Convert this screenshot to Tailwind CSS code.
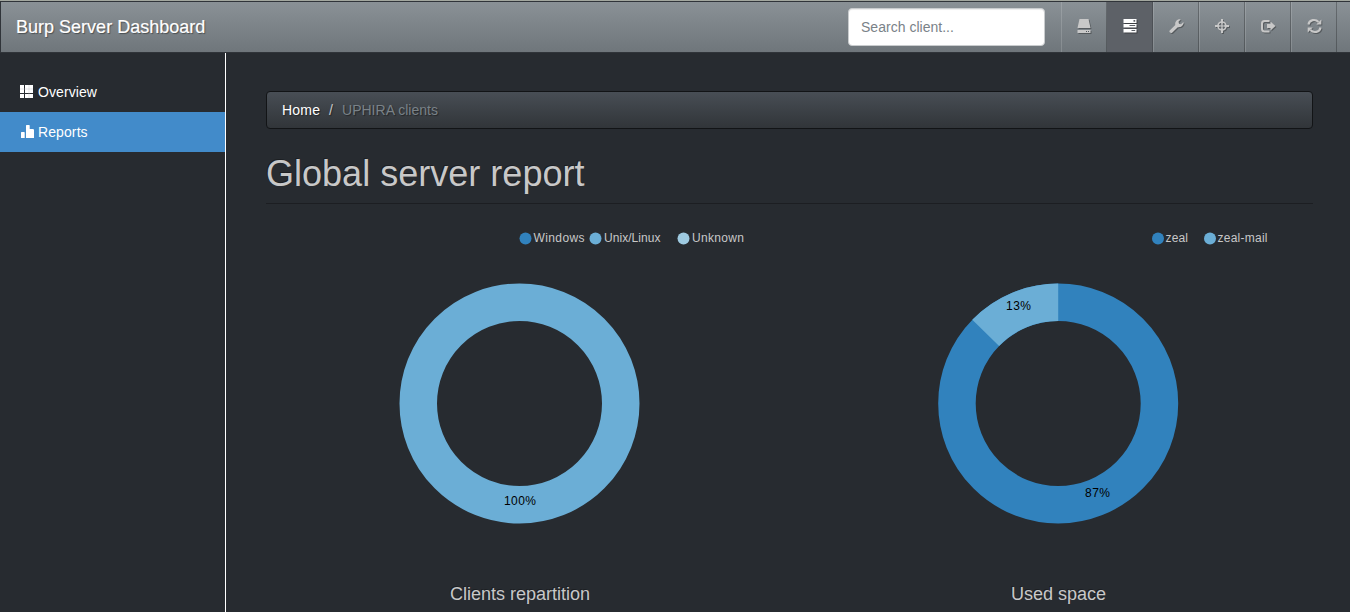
<!DOCTYPE html>
<html lang="en">
<head>
<meta charset="utf-8">
<title>Burp Server Dashboard</title>
<script src="https://cdn.jsdelivr.net/npm/@tailwindcss/browser@4"></script>
</head>
<body class="h-[612px] overflow-hidden bg-[#272b30] font-['Liberation_Sans',Arial,sans-serif] text-sm text-[#c8c8c8] flex flex-col">
<header class="h-[53px] shrink-0 border-t border-[#a3a79f]">
  <div class="h-[52px] border border-r-0 border-[#303439] bg-linear-to-b from-[#8a9196] to-[#6f767b] flex items-center">
    <h1 class="ml-[15px] text-[18px] leading-5 w-[300px] tracking-[0.01px] text-white [-webkit-text-stroke:0.2px_white] [text-shadow:1px_1px_1px_rgba(0,0,0,0.4)]">Burp Server Dashboard</h1>
    <div class="ml-auto mr-4 h-[38px] w-[197px] rounded bg-white border border-[#c9ccce] px-3 flex items-center text-[#7a8288] tracking-[0.02px] shadow-[inset_0_1px_1px_rgba(0,0,0,0.075)]">Search client...</div>
    <nav class="flex h-full mr-[13px] text-[#c8c8c8]">
      <a class="w-[46px] h-full flex items-center justify-center pb-0.5 border-l border-l-white/15 border-r border-r-black/25"><svg class="drop-shadow-[1px_1px_0_rgba(0,0,0,0.3)]" width="14" height="16" viewBox="0 0 14 16" fill="currentColor"><path d="M2.500 1h9l2 9H.5zM.5 12h13v3H.5z"/><path d="M9 13h1v1H9zM11 13h1v1h-1z" fill="#50565b"/></svg></a>
      <a class="w-[46px] h-full flex items-center justify-center pb-0.5 bg-[#5d6167] border-r border-r-[#4d5156] text-white"><svg class="drop-shadow-[1px_1px_0_rgba(0,0,0,0.35)]" width="14" height="16" viewBox="0 0 14 16" fill="currentColor"><path d="M.5 1h13v4H.5zM.5 6h13v3.500H.5zM.5 11h13v3.500H.5z"/><path d="M10.500 2h1.700v1.700h-1.700zM6.500 7h5.700v1H6.500zM8.500 12h3.700v1H8.500z" fill="#5d6167"/></svg></a>
      <a class="w-[46px] h-full flex items-center justify-center pb-0.5 border-l border-l-white/15 border-r border-r-black/25"><svg class="drop-shadow-[1px_1px_0_rgba(0,0,0,0.3)]" width="15" height="16" viewBox="0 0 15 16" fill="currentColor"><path d="M.7 12.500 6.300 7C5.600 4 8 .6 11.700 1.300L9.500 3.700l.5 2 2 .6 2.400-2.300C15 7.500 11.800 9.800 8.800 9.200L3.100 14.700Q1.800 15.400.8 14.300 0 13.400.7 12.500z"/></svg></a>
      <a class="w-[46px] h-full flex items-center justify-center pb-0.5 border-l border-l-white/15 border-r border-r-black/25"><svg class="drop-shadow-[1px_1px_0_rgba(0,0,0,0.3)]" width="14" height="16" viewBox="0 0 14 16" fill="none" stroke="currentColor"><circle cx="7" cy="8" r="4" stroke-width="1.600"/><path d="M7 1v4.500M7 10.500v4.500M0 8h4.500M9.500 8H14" stroke-width="2"/><path d="M7 5v6M4 8h6" stroke-width="1.200"/></svg></a>
      <a class="w-[46px] h-full flex items-center justify-center pb-0.5 border-l border-l-white/15 border-r border-r-black/25"><svg class="drop-shadow-[1px_1px_0_rgba(0,0,0,0.3)]" width="16" height="16" viewBox="0 0 16 16" fill="currentColor"><path d="M9.500 3H4.500Q2 3 2 5.500v5Q2 13.500 4.500 13.500h5" fill="none" stroke="currentColor" stroke-width="2"/><path d="M7 6h3.500V3.500L15.500 8l-5 4.500V10H7z"/></svg></a>
      <a class="w-[46px] h-full flex items-center justify-center pb-0.5 border-l border-l-white/15 border-r border-r-black/25"><svg class="drop-shadow-[1px_1px_0_rgba(0,0,0,0.3)]" width="15" height="16" viewBox="0 0 15 16" fill="currentColor"><path d="M1.500 6.500C2.200 1.500 8.500.7 11.500 4M13.500 9.500C12.800 14.500 6.500 15.300 3.500 12" fill="none" stroke="currentColor" stroke-width="2.100"/><path d="M14.300 1.500v5H9.300zM.7 14.500v-5h5z"/></svg></a>
    </nav>
  </div>
</header>
<div class="flex flex-1 min-h-0">
  <aside class="w-[226px] shrink-0 border-r border-white pt-[19px] text-white">
    <a class="flex h-10 items-center pl-5 gap-1 tracking-[0.08px]"><svg width="14" height="14" viewBox="0 0 14 14" fill="currentColor"><path d="M0 0h4v4H0zM5 0h8v4H5zM0 4h4v4H0zM5 4h8v4H5zM0 9h4v4H0zM5 9h8v4H5z"/><path d="M9 0v13M0 4h13" stroke="#bbbdc0" stroke-width=".4"/></svg>Overview</a>
    <a class="flex h-10 items-center pl-5 gap-1 bg-[#428bca] tracking-[0.1px]"><svg width="14" height="14" viewBox="0 0 14 14" fill="currentColor"><path d="M1 7.500l.5-.5h2.700l.5.500V13H1zM6 .5l.5-.5h2.700l.5.500V13H6zM9.500 4h3.700l.8.800V13H9.500z"/></svg>Reports</a>
  </aside>
  <main class="flex-1 min-w-0 pl-10 pr-[37px] pt-[38px] flex flex-col">
    <ol class="h-[38px] shrink-0 rounded border border-[#121416] bg-linear-to-b from-[#484e55] to-[#313539] flex items-center pl-[15px] tracking-[0.02px] [text-shadow:1px_1px_1px_rgba(0,0,0,0.4)]">
      <li class="text-white w-[47px] tracking-[0.2px]">Home</li><li class="w-[13px]">/</li><li class="text-[#7a8288]">UPHIRA clients</li>
    </ol>
    <h2 class="mt-[25px] h-[50px] shrink-0 border-b border-[#1c1e22] text-[36px] leading-10 tracking-[0.02px] [text-shadow:-1px_-1px_0_rgba(0,0,0,0.3)]">Global server report</h2>
    <div class="flex shrink-0 h-[408px] text-[18px]">
      <section class="w-[508px] shrink-0">
        <svg class="block" width="508" height="376" viewBox="266 204 508 376" font-family="Liberation Sans, Arial, sans-serif" font-size="12">
          <circle cx="525.500" cy="238.500" r="6" fill="#3182bd"/><circle cx="595.500" cy="238.500" r="6" fill="#6baed6"/><circle cx="683.500" cy="238.500" r="6" fill="#9ecae1"/>
          <g fill="#c8c8c8"><text x="533.500" y="242" textLength="51">Windows</text><text x="604" y="242" textLength="56.500">Unix/Linux</text><text x="692" y="242" textLength="52">Unknown</text></g>
          <circle cx="519.500" cy="403.500" r="101.250" fill="none" stroke="#6baed6" stroke-width="37.500"/>
          <text x="504" y="505" textLength="32" fill="#000">100%</text>
        </svg>
        <h4 class="pl-[184px] leading-7 whitespace-nowrap [text-shadow:-1px_-1px_0_rgba(0,0,0,0.3)]">Clients repartition</h4>
      </section>
      <section class="flex-1 min-w-0">
        <svg class="block" width="538" height="376" viewBox="774 204 538 376" font-family="Liberation Sans, Arial, sans-serif" font-size="12">
          <circle cx="1158" cy="238.500" r="6" fill="#3182bd"/><circle cx="1210" cy="238.500" r="6" fill="#6baed6"/>
          <g fill="#c8c8c8"><text x="1165.500" y="242" textLength="22.500">zeal</text><text x="1217.500" y="242" textLength="50">zeal-mail</text></g>
          <circle cx="1058.200" cy="403.500" r="101.250" fill="none" stroke="#3182bd" stroke-width="37.500"/>
          <path d="M1058.200 283.500A120 120 0 0 0 972.300 319.700L999.100 345.900A82.500 82.500 0 0 1 1058.200 321z" fill="#6baed6"/>
          <g fill="#000"><text x="1006" y="310" textLength="25">13%</text><text x="1085" y="497" textLength="25">87%</text></g>
        </svg>
        <h4 class="pl-[237px] leading-7 whitespace-nowrap [text-shadow:-1px_-1px_0_rgba(0,0,0,0.3)]">Used space</h4>
      </section>
    </div>
  </main>
</div>
</body>
</html>
